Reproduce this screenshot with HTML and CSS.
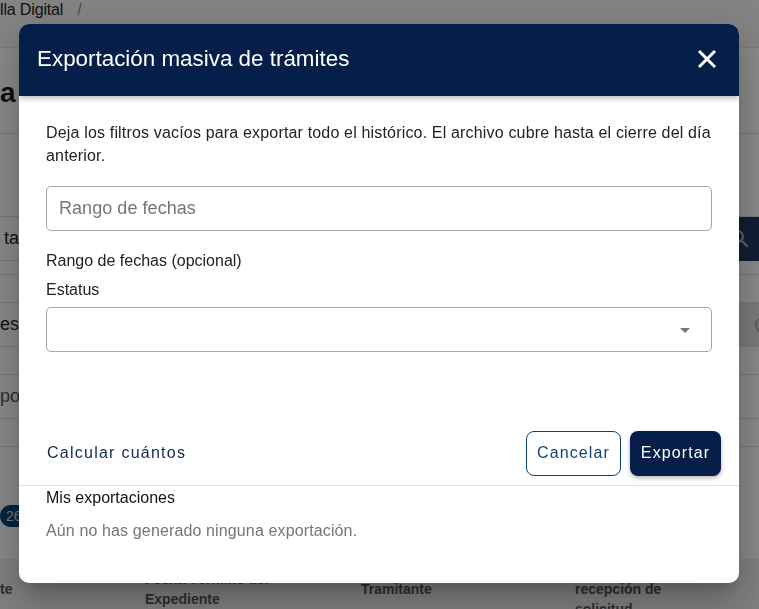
FILE: index.html
```html
<!DOCTYPE html>
<html lang="es">
<head>
<meta charset="utf-8">
<title>Exportación masiva de trámites</title>
<link rel="stylesheet" href="styles.css">
</head>
<body>
<div class="page">
  <div class="crumbs"><span>lla Digital</span><span class="crumb-sep">/</span></div>
  <div class="title-row"><h1 class="page-title">a c</h1></div>
  <div class="field-row search-row"><span>ta</span><button class="search-btn" aria-label="Buscar"><svg class="search-icon" viewBox="0 0 24 24"><path d="M15.5 14h-.79l-.28-.27A6.47 6.47 0 0 0 16 9.5 6.5 6.5 0 1 0 9.5 16c1.61 0 3.09-.59 4.23-1.57l.27.28v.79l5 4.99L20.49 19l-4.99-5zm-6 0C7.01 14 5 11.99 5 9.5S7.01 5 9.5 5 14 7.01 14 9.5 11.99 14 9.5 14z"/></svg></button></div>
  <div class="label-row"></div>
  <div class="field-row status-row"><span>es</span><span class="status-fill"><span class="status-ring"></span></span></div>
  <div class="field-row type-row"><span class="muted">po</span></div>
  <div class="spacer-row"></div>
  <div class="badge-row"><span class="badge">26</span></div>
  <div class="table-head">
    <div class="col-a">te</div>
    <div class="col-b">Fecha Término del<br>Expediente</div>
    <div class="col-c">Tramitante</div>
    <div class="col-d">recepción de<br>solicitud</div>
  </div>
</div>

<div class="overlay">
  <section class="modal" role="dialog" aria-labelledby="modal-title">
    <header class="modal-head">
      <h2 id="modal-title" class="modal-title">Exportación masiva de trámites</h2>
      <button class="close-btn" aria-label="Cerrar"><svg class="close-icon" viewBox="0 0 24 24"><path d="M19 6.41 17.59 5 12 10.59 6.41 5 5 6.41 10.59 12 5 17.59 6.41 19 12 13.41 17.59 19 19 17.59 13.41 12z"/></svg></button>
    </header>
    <div class="modal-body">
      <p class="intro">Deja los filtros vacíos para exportar todo el histórico. El archivo cubre hasta el cierre del día anterior.</p>
      <div class="input-box"><span class="placeholder">Rango de fechas</span></div>
      <div class="field-label range-label">Rango de fechas (opcional)</div>
      <div class="field-label status-label">Estatus</div>
      <div class="input-box select-box"><svg class="caret" viewBox="0 0 24 24"><path d="M7 10l5 5 5-5z"/></svg></div>
    </div>
    <div class="actions">
      <button class="link-btn">Calcular cuántos</button>
      <div class="action-group">
        <button class="btn btn-outline">Cancelar</button>
        <button class="btn btn-solid">Exportar</button>
      </div>
    </div>
    <div class="exports">
      <h3 class="exports-title">Mis exportaciones</h3>
      <p class="exports-empty">Aún no has generado ninguna exportación.</p>
    </div>
  </section>
</div>
</body>
</html>
```
FILE: styles.css
```css
* { box-sizing: border-box; }
html, body { margin: 0; height: 100%; overflow: hidden; }
body { font-family: "Liberation Sans", Arial, sans-serif; color: #222; background: #fff; }
button { font-family: inherit; cursor: pointer; }

.page { height: 609px; overflow: hidden; background: #fff; }
.crumbs { height: 48px; display: flex; gap: 14px; padding-top: 1px; font-size: 16px; line-height: 18px; letter-spacing: -.15px; background: #f4f4f4; color: #222; border-bottom: 1px solid #e4e4e4; }
.crumb-sep { color: #888; }
.title-row { height: 86px; border-bottom: 1px solid #ddd; padding-top: 28px; }
.page-title { margin: 0; font-size: 28px; line-height: 34px; font-weight: 700; color: #1c1c1c; }
.field-row { display: flex; align-items: center; justify-content: space-between; font-size: 18px; height: 45px; border-top: 1px solid #ddd; border-bottom: 1px solid #ddd; padding-left: 4px; }
.search-row { margin-top: 82px; }
.search-btn { width: 43px; height: 44px; border: 0; padding: 0; background: #1f3760; display: flex; align-items: center; padding-left: 12px; }
.search-icon { width: 24px; height: 24px; fill: #bdbdbd; }
.label-row { height: 14px; border-bottom: 1px solid #ddd; }
.status-row { margin-top: 27px; padding-left: 0; }
.status-fill { width: 20px; height: 44px; background: #e4e4e4; display: flex; align-items: center; padding-left: 16px; overflow: hidden; flex: none; }
.status-ring { width: 16px; height: 16px; border: 2px solid #aaa; border-radius: 50%; flex: none; }
.type-row { margin-top: 27px; padding-left: 0; }
.muted { color: #555; }
.spacer-row { height: 28px; border-bottom: 1px solid #ddd; }
.badge-row { height: 112px; padding-top: 58px; }
.badge { display: inline-block; width: 40px; height: 22px; padding-left: 6px; border-radius: 11px; background: #0a4474; color: #ddd; font-size: 14px; line-height: 22px; }
.table-head { height: 60px; display: grid; grid-template-columns: 145px 216px 214px 1fr; font-size: 14px; line-height: 20px; font-weight: 700; color: #555; background: #eee; }
.col-a, .col-c, .col-d { padding-top: 20px; }
.col-b { padding-top: 10px; }

.overlay { position: fixed; inset: 0; background: rgba(0, 0, 0, .46); padding: 24px 0 0 19px; }
.modal { width: 720px; height: 559px; background: #fff; border-radius: 10px; display: flex; flex-direction: column; box-shadow: 0 11px 15px -7px rgba(0,0,0,.2), 0 24px 38px 3px rgba(0,0,0,.14), 0 9px 46px 8px rgba(0,0,0,.12); overflow: hidden; }
.modal-head { height: 72px; flex: none; display: flex; align-items: center; justify-content: space-between; padding: 0 18px 2px; background: #051f4a; color: #fff; box-shadow: 0 2px 6px rgba(0,0,0,.3); position: relative; }
.modal-title { margin: 0; font-size: 22.4px; font-weight: 400; line-height: 30px; }
.close-btn { width: 28px; height: 28px; padding: 0; border: 0; background: none; display: flex; align-items: center; justify-content: center; }
.close-icon { width: 30px; height: 30px; flex: none; fill: #fff; stroke: #fff; stroke-width: .4; }

.modal-body { padding: 25px 27px 0; flex: none; height: 326px; }
.intro { margin: 0; font-size: 16px; line-height: 23px; color: #222; letter-spacing: .17px; }
.input-box { height: 45px; width: 666px; margin-top: 19px; border: 1px solid #a4a4a4; border-radius: 5px; display: flex; align-items: center; padding-left: 12px; }
.placeholder { font-size: 18px; color: #757575; letter-spacing: .05px; }
.field-label { font-size: 16px; line-height: 20px; color: #222; }
.range-label { margin-top: 20px; }
.status-label { margin-top: 9px; }
.select-box { margin-top: 7px; justify-content: flex-end; padding: 0 14px 0 0; }
.caret { width: 24px; height: 24px; fill: #757575; }

.actions { height: 64px; flex: none; padding: 9px 18px 0 27px; display: flex; justify-content: space-between; align-items: flex-start; border-bottom: 1px solid #e0e0e0; }
.link-btn { height: 45px; border: 0; background: none; padding: 0 0 2px 1px; color: #11294f; font-size: 16px; letter-spacing: 1.25px; }
.action-group { display: flex; gap: 9px; }
.btn { height: 45px; border-radius: 8px; font-size: 16px; letter-spacing: 1.1px; padding: 0 0 2px; }
.btn-outline { width: 95px; background: #fff; border: 1px solid #0a4474; color: #0f4374; }
.btn-solid { width: 91px; background: #051f4a; border: 0; color: #fff; box-shadow: 0 2px 4px rgba(0,0,0,.3); }

.exports { padding: 2px 27px 0; }
.exports-title { margin: 0; font-size: 16px; font-weight: 400; line-height: 20px; color: #111; }
.exports-empty { margin: 13px 0 0; font-size: 16px; line-height: 20px; color: #757575; letter-spacing: .13px; }
```
